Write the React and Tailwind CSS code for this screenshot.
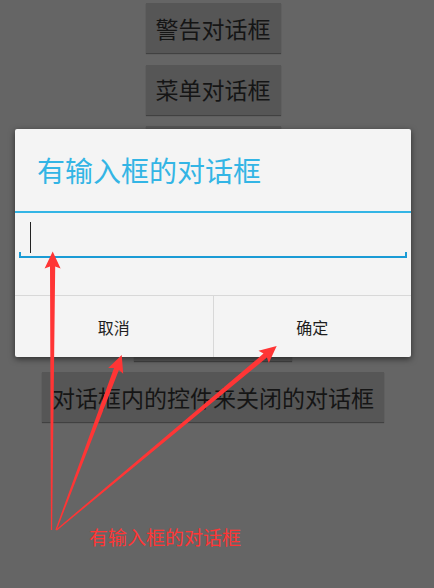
const buttons = [
  "警告对话框",
  "菜单对话框",
  "单选对话框",
  "多选对话框",
  "列表对话框",
  "自定义对话框",
  "对话框内的控件来关闭的对话框",
];

// red annotation arrows: tail -> tip
const arrows = [
  { from: [51.5, 530], to: [52.7, 251.5] },
  { from: [56, 530], to: [121.7, 355] },
  { from: [56.5, 530], to: [276.7, 346] },
];

const arrowPoints = ({ from, to }) => {
  const dx = to[0] - from[0];
  const dy = to[1] - from[1];
  const len = Math.hypot(dx, dy);
  const ux = dx / len;
  const uy = dy / len;
  const nx = -uy;
  const ny = ux;
  const bx = to[0] - ux * 15;
  const by = to[1] - uy * 15;
  const p = (x, y) => `${x.toFixed(1)},${y.toFixed(1)}`;
  return [
    p(from[0] + nx * 0.6, from[1] + ny * 0.6),
    p(bx + nx * 2.6, by + ny * 2.6),
    p(bx - ux * 2 + nx * 8, by - uy * 2 + ny * 8),
    p(to[0], to[1]),
    p(bx - ux * 2 - nx * 8, by - uy * 2 - ny * 8),
    p(bx - nx * 2.6, by - ny * 2.6),
    p(from[0] - nx * 0.6, from[1] - ny * 0.6),
  ].join(" ");
};

const App = () => {
  return (
    <div
      className="relative w-[434px] h-[588px] overflow-hidden bg-[#656565]"
      style={{ fontFamily: '"Noto Sans CJK SC", "Noto Sans", sans-serif' }}
    >
      {/* Button list behind the dialog */}
      <div className="w-[426px] flex flex-col items-center pt-[3px] gap-[11.5px]">
        {buttons.map((label) => (
          <div
            key={label}
            className="h-[50px] px-[10px] flex items-center bg-[#565656] text-[23px] leading-none text-[#151515] shadow-[0_1px_1px_rgba(0,0,0,0.35)]"
          >
            {label}
          </div>
        ))}
      </div>

      {/* Dialog */}
      <div className="absolute left-[15px] top-[129px] w-[396px] h-[228px] bg-[#f4f4f4] rounded-[2px] shadow-[0_2px_6px_rgba(0,0,0,0.55)] flex flex-col">
        <div className="h-[82px] flex items-center pl-[22px] text-[28px] leading-none text-[#33b5e5]">
          有输入框的对话框
        </div>
        <div className="h-[2px] bg-[#33b5e5]" />
        <div className="h-[82px] px-[4px] pt-[9px]">
          <div className="relative h-[36px] border-b-2 border-l-2 border-r-2 border-[#1a9bd5] [clip-path:inset(30px_0_0_0)]" />
          <div className="-mt-[36px] ml-[11px] w-px h-[31px] bg-[#222]" />
        </div>
        <div className="h-px bg-[#d8d8d8]" />
        <div className="flex-1 flex">
          <div className="flex-1 flex items-center justify-center text-[16px] text-[#1e1e1e]">
            取消
          </div>
          <div className="w-px bg-[#d8d8d8]" />
          <div className="flex-1 flex items-center justify-center text-[16px] text-[#1e1e1e]">
            确定
          </div>
        </div>
      </div>

      {/* Annotation */}
      <svg
        className="absolute inset-0 pointer-events-none"
        width="434"
        height="588"
        viewBox="0 0 434 588"
      >
        {arrows.map((a, i) => (
          <polygon key={i} points={arrowPoints(a)} fill="#ff3535" />
        ))}
      </svg>
      <div className="absolute left-[89px] top-[527px] text-[19px] leading-none text-[#ff3535]">
        有输入框的对话框
      </div>
    </div>
  );
};

export default App;
